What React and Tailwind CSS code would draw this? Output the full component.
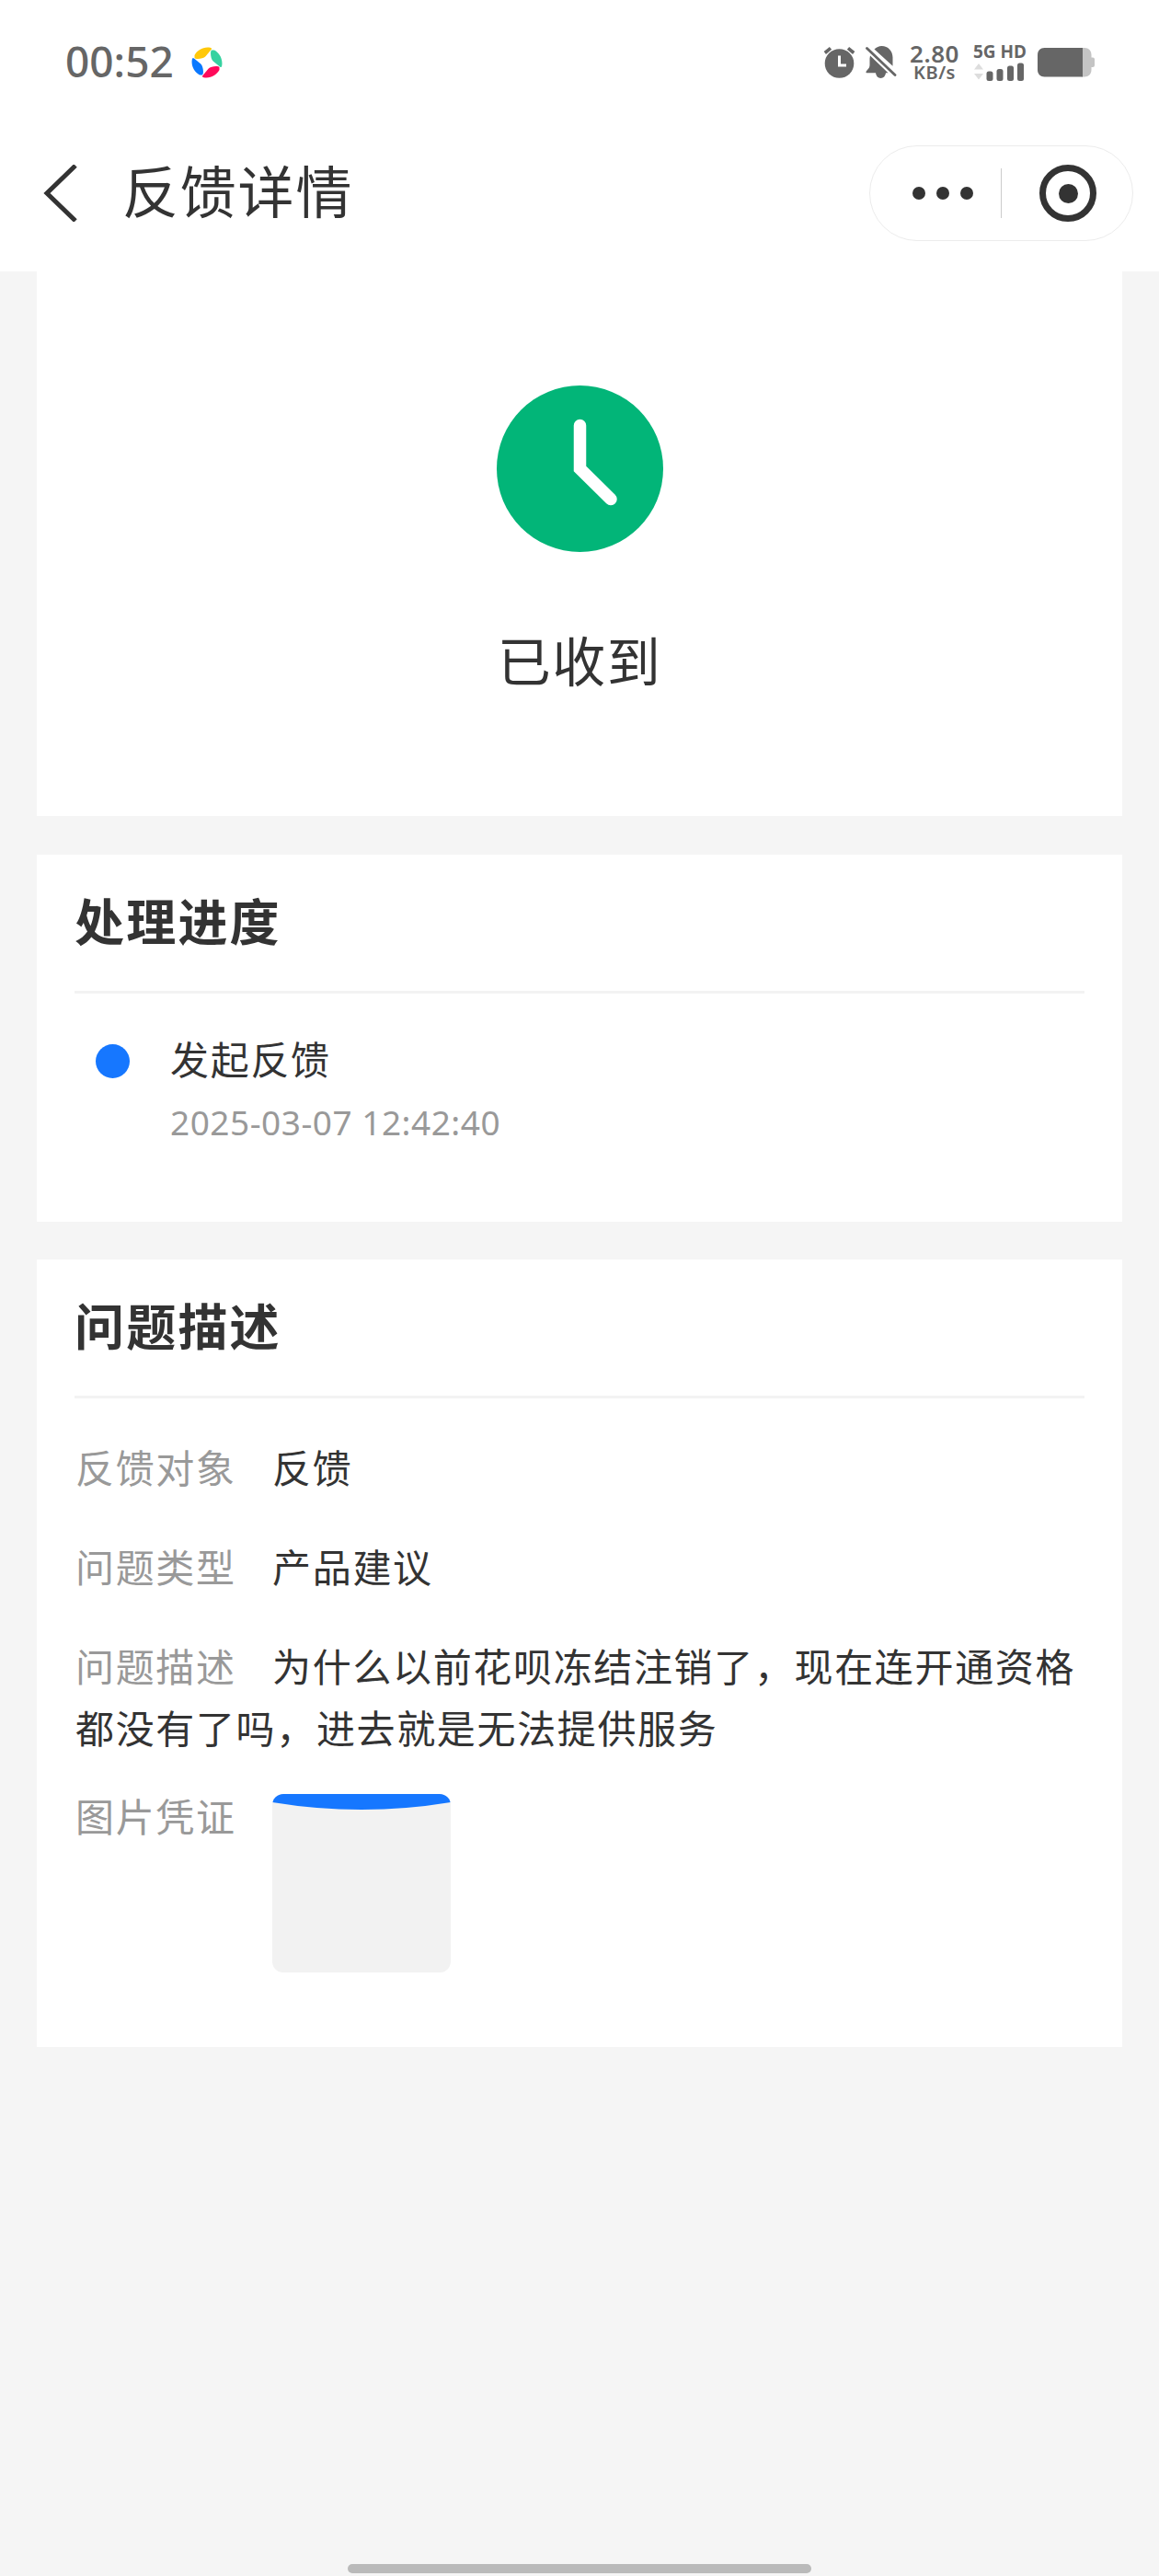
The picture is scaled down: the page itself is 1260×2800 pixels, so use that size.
import React from "react";

const details = [
  { label: "反馈对象", value: "反馈" },
  { label: "问题类型", value: "产品建议" },
];

const AppLogo = () => (
  <svg className="ml-[19px] w-[34px] h-[34px]" viewBox="0 0 34 34">
    <path fill="#ffc80a" d="M3.500 9C6.500 3.500 13-.5 20.500.8Q23 1.300 21.500 3L15.500 10.300C13 13 5 13.800 3.500 12Z" />
    <path fill="#36d2a0" d="M25 3.500C30.500 6.500 34.500 13 33.200 20.500Q32.700 23 31 21.500L23.700 15.500C21 13 20.200 5 22 3.500Z" />
    <path fill="#ff0a5a" d="M30.500 25C27.500 30.500 21 34.500 13.500 33.200Q11 32.700 12.500 31L18.500 23.700C21 21 29 20.200 30.500 22Z" />
    <path fill="#0a78ff" d="M9 30.500C3.500 27.500-.5 21 .8 13.500Q1.300 11 3 12.500L10.300 18.500C13 21 13.800 29 12 30.500Z" />
  </svg>
);

const AlarmIcon = () => (
  <svg className="w-[36px] h-[36px]" viewBox="0 0 36 36">
    <circle cx="17.500" cy="19" r="15.800" fill="#666" />
    <path d="M1.800 7.500 8 2.300M33.200 7.500 27 2.300" stroke="#666" strokeWidth="3.600" />
    <path d="M17.500 10.500V21H25" fill="none" stroke="#fff" strokeWidth="3" />
  </svg>
);

const MutedBellIcon = () => (
  <svg className="ml-[10px] w-[34px] h-[36px]" viewBox="0 0 34 36">
    <path
      fill="#666"
      d="M9.500 3.500C12 1.200 14.500 0 17.500 0C24.500 0 29.500 5.500 29.500 12.500V21.800ZM5 10.500 24.500 29.300H22C21.500 32.800 19.500 35 16.500 35S11.500 32.800 11 29.300H1C0 29.300.500 27.500 1.500 26.500C3.500 24.500 4.500 23 4.500 20.500V13.500Z"
    />
    <path d="M1.500 2.500 32 31.500" stroke="#666" strokeWidth="2.800" strokeLinecap="round" />
  </svg>
);

const SignalIcon = () => (
  <svg className="mt-[4px] w-[56px] h-[20px]" viewBox="0 0 56 20">
    <path d="M6 1 11 7.500H1ZM6 18.500 11 12H1Z" fill="#ddd" />
    <rect x="14.500" y="9.500" width="7" height="10.500" rx="2.500" fill="#666" />
    <rect x="25.500" y="7" width="7" height="13" rx="2.500" fill="#666" />
    <rect x="37" y="3.500" width="7" height="16.500" rx="2.500" fill="#666" />
    <rect x="48" y="0.500" width="7" height="19.500" rx="2.500" fill="#666" />
  </svg>
);

const BatteryIcon = () => (
  <svg className="ml-[12px] w-[63px] h-[32px]" viewBox="0 0 63 32">
    <path d="M48 0H51C55.500 0 58.500 3 58.500 7.500V10.500H60Q62 10.500 62 12.500V19Q62 21 60 21H58.500V24C58.500 28.500 55.500 31.500 51 31.500H48Z" fill="#c4c4c4" />
    <path d="M49 0V31.500H7.500C3 31.500 0 28.500 0 24V7.500C0 3 3 0 7.500 0Z" fill="#666" />
  </svg>
);

const StatusBar = () => (
  <div className="h-[136px] pl-[71px] pr-[69px] flex items-center text-[#666] font-['Noto_Sans',sans-serif]">
    <div className="w-[118px] mb-[4px] text-[46px] leading-[60px] font-medium whitespace-nowrap">
      00:52
    </div>
    <AppLogo />
    <div className="ml-auto flex items-center">
      <AlarmIcon />
      <MutedBellIcon />
      <div className="ml-[12px] w-[58px] flex flex-col items-center font-semibold">
        <span className="text-[26px] leading-[22px] tracking-[0.5px]">2.80</span>
        <span className="text-[20px] leading-[20px] tracking-[0.5px]">KB/s</span>
      </div>
      <div className="ml-[13px] w-[58px] flex flex-col">
        <span className="text-[19px] leading-[16px] font-bold whitespace-nowrap">5G HD</span>
        <SignalIcon />
      </div>
      <BatteryIcon />
    </div>
  </div>
);

const NavBar = () => (
  <div className="h-[159px] pl-[46px] pr-[28px] pb-[11px] flex items-center">
    <svg className="w-[40px] h-[62px]" viewBox="0 0 40 62">
      <path d="M36 1 5 31 36 61" fill="none" stroke="#333" strokeWidth="5" />
    </svg>
    <h1 className="ml-[47px] mb-[8px] text-[61px] leading-[80px] tracking-[1.800px]">反馈详情</h1>
    <div className="ml-auto w-[287px] h-[104px] rounded-full border border-[#ececec] flex items-center">
      <div className="ml-[46px] flex gap-[12px]">
        <span className="w-[14px] h-[14px] rounded-full bg-[#333]" />
        <span className="w-[14px] h-[14px] rounded-full bg-[#333]" />
        <span className="w-[14px] h-[14px] rounded-full bg-[#333]" />
      </div>
      <div className="ml-[30px] w-px h-[54px] bg-[#ccc]" />
      <div className="ml-[41px] w-[62px] h-[62px] rounded-full border-[7px] border-[#333] flex items-center justify-center">
        <span className="w-[21px] h-[21px] rounded-full bg-[#333]" />
      </div>
    </div>
  </div>
);

const Section = ({ title, className, children }) => (
  <section className={`mx-[40px] bg-white px-[41px] ${className}`}>
    <h2 className="h-[148px] pt-[33px] text-[54px] leading-[76px] tracking-[2.200px] font-bold">
      {title}
    </h2>
    <div className="h-[3px] bg-[#f3f3f3]" />
    {children}
  </section>
);

const Label = ({ children }) => (
  <span className="mr-[39.500px] text-[#999]">{children}</span>
);

const App = () => {
  return (
    <div className="w-[1260px] h-[2800px] flex flex-col bg-[#f5f5f5] text-[#333] font-['Noto_Sans_CJK_SC',sans-serif]">
      <header className="bg-white">
        <StatusBar />
        <NavBar />
      </header>

      {/* Result */}
      <section className="mx-[40px] h-[592px] bg-white flex flex-col items-center">
        <svg className="mt-[124px] w-[181px] h-[181px]" viewBox="0 0 181 181">
          <circle cx="90.500" cy="90.500" r="90.500" fill="#02b578" />
          <path d="M90.500 43.500V90.500L124 123.500" fill="none" stroke="#fff" strokeWidth="13.500" strokeLinecap="round" />
        </svg>
        <p className="mt-[74px] text-[58px] leading-[84px] tracking-[1.500px]">已收到</p>
      </section>

      {/* Progress */}
      <Section title="处理进度" className="mt-[42px] h-[399px]">
        <div className="pt-[36px] pl-[23px] flex items-start">
          <span className="mt-[19px] w-[37px] h-[37px] rounded-full bg-[#1677ff]" />
          <div className="ml-[44px]">
            <p className="text-[42px] leading-[68px] tracking-[1.700px]">发起反馈</p>
            <p className="mt-[2px] text-[37px] leading-[68px] tracking-[0.500px] text-[#999] font-['Noto_Sans',sans-serif]">
              2025-03-07 12:42:40
            </p>
          </div>
        </div>
      </Section>

      {/* Description */}
      <Section title="问题描述" className="mt-[41px] h-[856px]">
        <div className="pt-[40px] pl-px text-[42px] leading-[67px] tracking-[1.650px]">
          {details.map((item) => (
            <p key={item.label} className="mb-[41px]">
              <Label>{item.label}</Label>
              {item.value}
            </p>
          ))}
          <p className="whitespace-nowrap">
            <Label>问题描述</Label>
            为什么以前花呗冻结注销了，现在连开通资格
            <br />
            都没有了吗，进去就是无法提供服务
          </p>
          <div className="mt-[29px] flex items-start">
            <Label>图片凭证</Label>
            <div className="mt-[11px] w-[194px] h-[194px] rounded-[12px] overflow-hidden bg-[#f2f2f2]">
              <svg className="w-[194px] h-[18px]" viewBox="0 0 194 18">
                <path d="M0 0H194V9Q97 25 0 9Z" fill="#1677ff" />
              </svg>
            </div>
          </div>
        </div>
      </Section>

      <div className="mt-auto mb-[3px] mx-auto w-[504px] h-[10px] rounded-full bg-[#bababa]" />
    </div>
  );
};

export default App;
